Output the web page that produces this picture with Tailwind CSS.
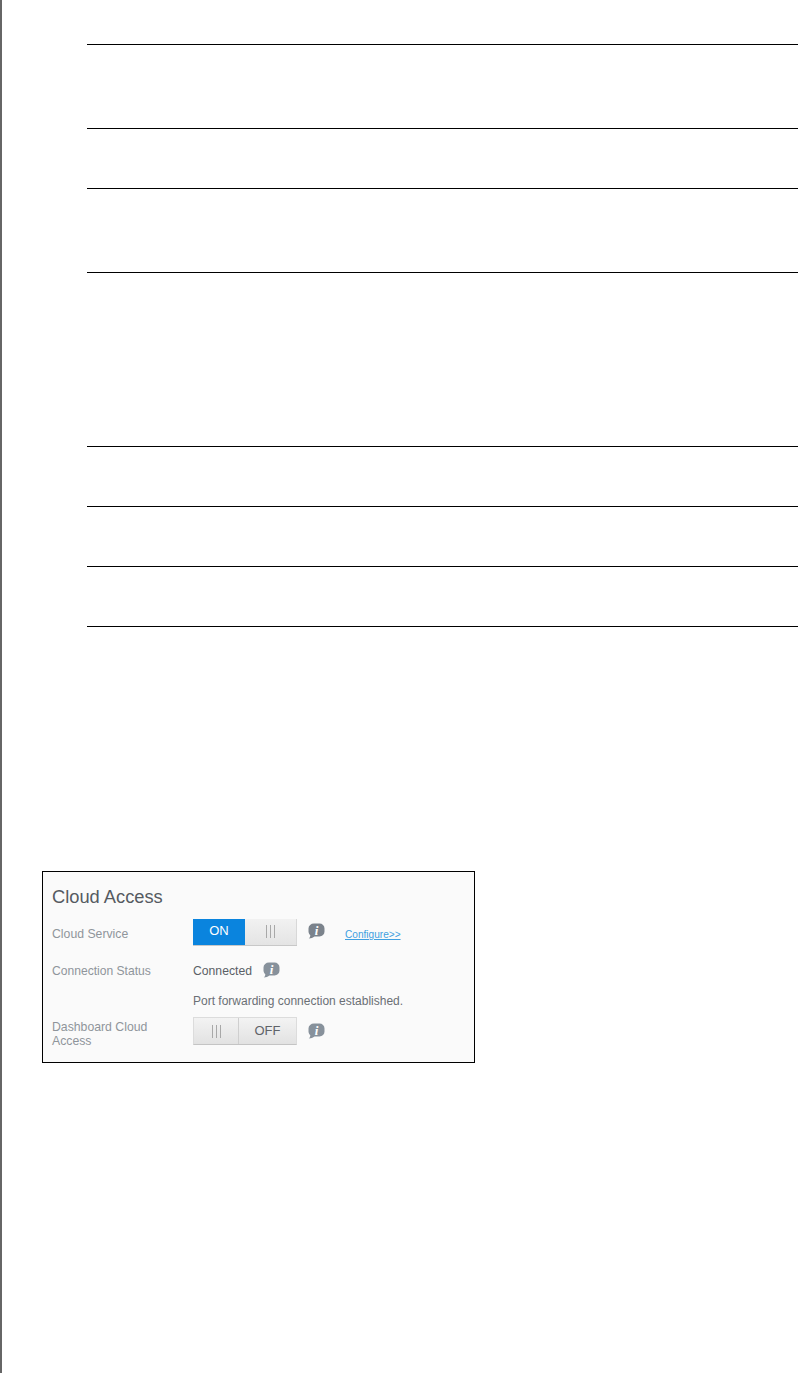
<!DOCTYPE html>
<html lang="en">
<head>
  <meta charset="UTF-8" />
  <meta name="viewport" content="width=device-width, initial-scale=1.0" />
  <title>Cloud Access</title>
  <script src="https://cdn.jsdelivr.net/npm/@tailwindcss/browser@4"></script>
</head>
<body class="bg-white font-['Liberation_Sans',Arial,sans-serif]">
  <div class="flex h-[1373px] w-[798px] overflow-hidden">
    <div class="w-[2px] shrink-0 bg-[#666666]"></div>

    <main class="flex-1 pt-[44px] pl-[40px]">
      <!-- empty table rows -->
      <div class="ml-[45px] border-b border-black">
        <div class="h-[84px] border-t border-black"></div>
        <div class="h-[60px] border-t border-black"></div>
        <div class="h-[84px] border-t border-black"></div>
        <div class="h-[174px] border-t border-black"></div>
        <div class="h-[60px] border-t border-black"></div>
        <div class="h-[60px] border-t border-black"></div>
        <div class="h-[60px] border-t border-black"></div>
      </div>

      <!-- cloud access panel -->
      <section class="mt-[244px] flex h-[192px] w-[433px] flex-col border border-black bg-[#fafafa] pl-[9px]">
        <h2 class="mt-[15px] h-[20px] text-[18.3px] leading-[20px] text-[#555a61]">Cloud Access</h2>

        <div class="mt-[12px] flex h-[26px] items-center">
          <span class="mt-[4px] w-[141px] text-[12.25px] text-[#8f959b]">Cloud Service</span>
          <div class="flex h-[27px] w-[104px] border-b border-[#c8c8c8] bg-gradient-to-b from-[#f1f1f1] to-[#e4e4e4]">
            <div class="flex w-[52px] items-center justify-center bg-[#0a84de] pb-[2px] text-[13px] text-white">ON</div>
            <div class="flex flex-1 items-center justify-center gap-[3px] border-r border-[#d8d8d8]">
              <i class="h-[13px] w-px bg-[#a8a8a8]"></i><i class="h-[13px] w-px bg-[#a8a8a8]"></i><i class="h-[13px] w-px bg-[#a8a8a8]"></i>
            </div>
          </div>
          <svg class="ml-[11px] mb-[2px]" width="17" height="16" viewBox="0 0 17 16">
            <path d="M6 .5h5.500a5 5 0 0 1 5 5v3a5 5 0 0 1-5 5H6.500C5 14.500 3 15.500 .8 15.600 2 14.600 2.200 13.600 2.300 12.300 1.200 11.400 .5 10 .5 8.500v-3a5.500 5 0 0 1 5.500-5z" fill="#7b838c"/>
            <text x="8.500" y="11.500" font-family="Liberation Serif" font-size="13" font-weight="700" font-style="italic" text-anchor="middle" fill="#ffffff">i</text>
          </svg>
          <a href="#" class="ml-[20px] mt-[5px] text-[10.1px] text-[#3f9fe0] underline">Configure&gt;&gt;</a>
        </div>

        <div class="mt-[13px] flex h-[26px] items-center">
          <span class="w-[141px] text-[12.1px] text-[#8f959b]">Connection Status</span>
          <span class="text-[12.2px] text-[#5a5f66]">Connected</span>
          <svg class="ml-[11px] mb-[3px]" width="17" height="16" viewBox="0 0 17 16">
            <path d="M6 .5h5.500a5 5 0 0 1 5 5v3a5 5 0 0 1-5 5H6.500C5 14.500 3 15.500 .8 15.600 2 14.600 2.200 13.600 2.300 12.300 1.200 11.400 .5 10 .5 8.500v-3a5.500 5 0 0 1 5.500-5z" fill="#87919b"/>
            <text x="8.500" y="11.500" font-family="Liberation Serif" font-size="13" font-weight="700" font-style="italic" text-anchor="middle" fill="#ffffff">i</text>
          </svg>
        </div>

        <p class="mt-[10px] ml-[141px] h-[14px] text-[12px] leading-[14px] text-[#6a6f75]">Port forwarding connection established.</p>

        <div class="mt-[9px] flex h-[28px] items-center">
          <span class="mt-[5px] w-[141px] text-[12.25px] leading-[14px] text-[#8f959b]">Dashboard Cloud<br />Access</span>
          <div class="flex h-[28px] w-[104px] border border-[#dcdcdc] border-b-[#c4c4c4] bg-gradient-to-b from-[#f3f3f3] to-[#e2e2e2]">
            <div class="flex w-[45px] items-center justify-center gap-[3px] border-r border-[#cfcfcf]">
              <i class="h-[13px] w-px bg-[#a8a8a8]"></i><i class="h-[13px] w-px bg-[#a8a8a8]"></i><i class="h-[13px] w-px bg-[#a8a8a8]"></i>
            </div>
            <div class="flex flex-1 items-center justify-center text-[13px] text-[#5f6368]">OFF</div>
          </div>
          <svg class="ml-[11px]" width="17" height="16" viewBox="0 0 17 16">
            <path d="M6 .5h5.500a5 5 0 0 1 5 5v3a5 5 0 0 1-5 5H6.500C5 14.500 3 15.500 .8 15.600 2 14.600 2.200 13.600 2.300 12.300 1.200 11.400 .5 10 .5 8.500v-3a5.500 5 0 0 1 5.500-5z" fill="#87919b"/>
            <text x="8.500" y="11.500" font-family="Liberation Serif" font-size="13" font-weight="700" font-style="italic" text-anchor="middle" fill="#ffffff">i</text>
          </svg>
        </div>
      </section>
    </main>
  </div>
</body>
</html>
